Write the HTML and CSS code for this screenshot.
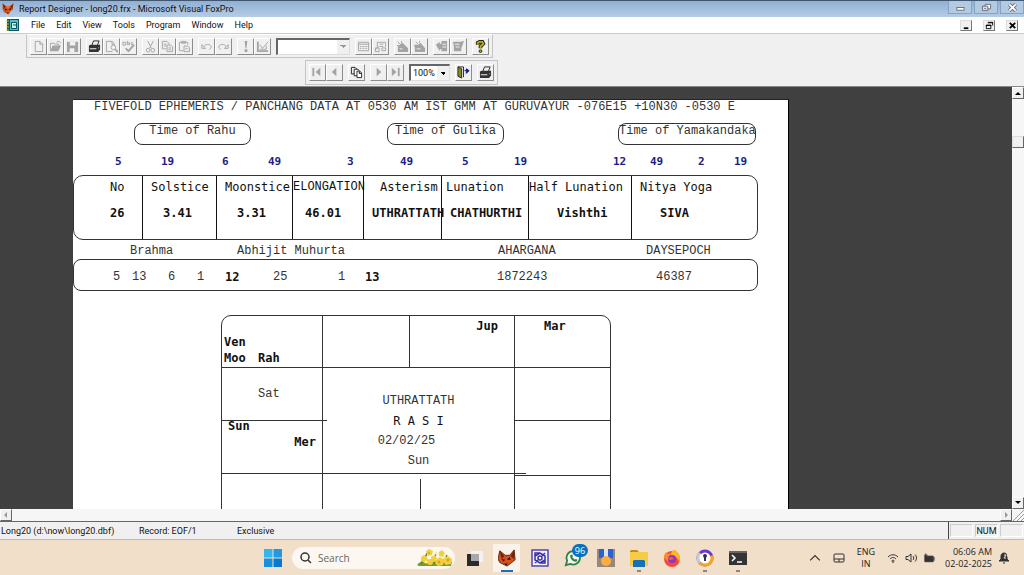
FILE: index.html
```html
<!DOCTYPE html>
<html lang="en">
<head>
    <meta charset="UTF-8">
    <meta name="viewport" content="width=device-width, initial-scale=1.0">
    <title>Report Designer - long20.frx</title>
    <link rel="stylesheet" href="styles.css">
</head>
<body>
    <header class="titlebar">
        <svg class="app-icon" viewBox="0 0 20 20"><path d="M1 1l6 4h6l6-4-1 10-4 3-3 5-7-3-3-5z" fill="#d2511f"/><path d="M1 1l5 5-3 5zM19 1l-5 5 3 5z" fill="#7a2a14"/><path d="M5 9l4 2-3 2zM15 8l-4 3 3 1zM8 16l3 0-1 2z" fill="#241008"/><path d="M7 6h6l-3 4z" fill="#f08a3a"/></svg>
        <span class="title">Report Designer - long20.frx - Microsoft Visual FoxPro</span>
        <div class="window-buttons">
            <button type="button" aria-label="Minimize"><svg viewBox="0 0 12 10"><rect x="2" y="5" width="8" height="3" fill="#fff" stroke="#667"/></svg></button>
            <button type="button" aria-label="Restore"><svg viewBox="0 0 12 10"><path d="M4.500 1.500h6v5h-6z" fill="#fff" stroke="#667"/><path d="M1.500 3.500h6v5h-6z" fill="#dde" stroke="#667"/><path d="M3.500 5.500h2v1h-2z" fill="#667"/></svg></button>
            <button type="button" aria-label="Close"><svg viewBox="0 0 12 10"><path d="M2.500 1.500l7 7M9.500 1.500l-7 7" stroke="#667" stroke-width="4"/><path d="M2.500 1.500l7 7M9.500 1.500l-7 7" stroke="#fff" stroke-width="2"/></svg></button>
        </div>
    </header>

    <nav class="menubar">
        <svg class="report-icon" viewBox="0 0 14 13"><path d="M1 0h12v12H1z" fill="#0b5560"/><path d="M4 1h8v10H4z" fill="#4fc3c3"/><path d="M5.500 3.500h5v6h-5z" fill="#c8f4f0" stroke="#0b5560"/><path d="M7 6h3" stroke="#0b5560"/><path d="M0 2h3M0 5h3M0 8h3M0 11h3" stroke="#d8c840"/></svg>
        <a href="#">File</a>
        <a href="#">Edit</a>
        <a href="#">View</a>
        <a href="#">Tools</a>
        <a href="#">Program</a>
        <a href="#">Window</a>
        <a href="#">Help</a>
        <div class="child-buttons">
            <button type="button" aria-label="Minimize report"><svg viewBox="0 0 10 10"><path d="M2 8h5" stroke="#000" stroke-width="2"/></svg></button>
            <button type="button" aria-label="Restore report"><svg viewBox="0 0 10 10"><path d="M3.500 1.500h5v3.500M1.500 4.500h5v4h-5zM3 2h6M1 5h6" fill="none" stroke="#000"/></svg></button>
            <button type="button" aria-label="Close report"><svg viewBox="0 0 10 10"><path d="M2 2l6 6M8 2l-6 6" stroke="#000" stroke-width="2"/></svg></button>
        </div>
    </nav>

    <div class="toolbars">
        <div class="toolbar standard">
            <div class="group">
                <button type="button" aria-label="New"><svg viewBox="0 0 14 14"><path d="M3.500 1.500h5l3 3v8h-8zM8.500 1.500v3h3"/></svg></button>
                <button type="button" aria-label="Open"><svg viewBox="0 0 14 14"><path d="M1.500 11.500v-8h4l1 1h4v2M8 2.500l3-1 2 2" /><path class="solid" d="M1 12l3-6h9l-3 6z"/></svg></button>
                <button type="button" aria-label="Save"><svg viewBox="0 0 14 14"><path class="solid" d="M1 2h12v11H1z"/><path class="hole" d="M4 2h6v4H4zM4 9h5v4H4z"/></svg></button>
            </div>
            <div class="group">
                <button type="button" aria-label="Print" class="on"><svg viewBox="0 0 14 14"><path d="M4 6l2-5h6l-2 5"/><path class="solid" d="M1 6l2-1h10v5l-2 3H1z"/><path class="hole" d="M2 9h7v1H2zM11 8h1v1h-1z"/></svg></button>
                <button type="button" aria-label="Print Preview"><svg viewBox="0 0 14 14"><path d="M8 12.500H1.500v-11h6l3 3M7.500 1.500v3h3"/><circle cx="9" cy="8" r="2.500"/><path d="M11 10l3 3" stroke-width="2"/></svg></button>
                <button type="button" aria-label="Spelling"><svg viewBox="0 0 14 14"><path d="M1 2.500h3v3H1zM6 1v4h2V3H6M12 3h-2v2h2"/><path d="M4 9l3 3 6-7" stroke-width="2"/></svg></button>
            </div>
            <div class="group">
                <button type="button" aria-label="Cut"><svg viewBox="0 0 14 14"><path d="M4 1l4 8M10 1L6 9"/><circle cx="4.500" cy="11" r="2"/><circle cx="9.500" cy="11" r="2"/></svg></button>
                <button type="button" aria-label="Copy"><svg viewBox="0 0 14 14"><path d="M6 9.500H1.500v-8h5l2 2V5M3 4.500h3M3 6.500h3"/><path d="M6.500 5.500h4l2 2v5h-6zM8 8.500h3M8 10.500h3"/></svg></button>
                <button type="button" aria-label="Paste"><svg viewBox="0 0 14 14"><path d="M6 11.500H1.500v-9h9V5M4 3.500V1.500h4v2z"/><path d="M6.500 6.500h4l2 2v4h-6zM8 9.500h3"/></svg></button>
            </div>
            <div class="group">
                <button type="button" aria-label="Undo"><svg viewBox="0 0 14 14"><path d="M4 7c2-3 7-3 8 0 0 2-1 3-2 3M2 5v4h4z"/></svg></button>
                <button type="button" aria-label="Redo"><svg viewBox="0 0 14 14"><path d="M10 7C8 4 3 4 2 7c0 2 1 3 2 3M12 5v4H8z"/></svg></button>
            </div>
            <div class="group">
                <button type="button" aria-label="Run"><svg viewBox="0 0 14 14"><path class="solid" d="M6 1h3l-1 8H7zM6 10h3v3H6z"/></svg></button>
                <button type="button" aria-label="Modify Form"><svg viewBox="0 0 14 14"><path d="M2 2v9M1 12h12" stroke-width="2"/><path d="M4 5l3 4 6-7M4 10h7V6"/></svg></button>
            </div>
            <select class="database" aria-label="Database" disabled><option></option></select>
            <div class="group">
                <button type="button" aria-label="Command Window"><svg viewBox="0 0 14 14"><path d="M1.500 2.500h11v9h-11zM1 4.500h12M3 7h2M6 7h2M9 7h2M3 9h2M6 9h2M9 9h2"/></svg></button>
                <button type="button" aria-label="View Window"><svg viewBox="0 0 14 14"><path d="M3.500 7.500v-5h9v5M1.500 8.500h4v4h-4zM6 7h4M6 4.500h4M8.500 8.500h4v3h-4zM1 11l4-4"/></svg></button>
            </div>
            <div class="group">
                <button type="button" aria-label="Form Wizard"><svg viewBox="0 0 14 14"><path d="M2 2l4 4M6 1v3M1 6h3"/><path class="solid" d="M2 7l5-4 6 6v4H2z"/><path class="hole" d="M4 9h3v1H4z"/></svg></button>
                <button type="button" aria-label="Report Wizard"><svg viewBox="0 0 14 14"><path d="M3 2l3 3M7 1v2"/><path class="solid" d="M1 5h5l2-2 5 6v4H2V8z"/><path class="hole" d="M4 9h4v1H4z"/></svg></button>
            </div>
            <div class="group">
                <button type="button" aria-label="AutoForm"><svg viewBox="0 0 14 14"><path class="solid" d="M1 5l4-3v2h2V1h6v11H7v-2H5v2z"/><path class="hole" d="M8 4h4v1H8zM8 7h4v1H8z"/></svg></button>
                <button type="button" aria-label="AutoReport"><svg viewBox="0 0 14 14"><path class="solid" d="M1 2h8l4-1-3 8v3H2V7z"/><path class="hole" d="M3 4h5v1H3zM4 7h4v1H4z"/></svg></button>
            </div>
            <button type="button" aria-label="Help" class="on"><svg viewBox="0 0 14 14"><path d="M4 5V3l2-1h3l1 2-3 3v2" stroke="#222" stroke-width="4"/><path d="M4 5V3l2-1h3l1 2-3 3v2" stroke="#b8aa10" stroke-width="2"/><circle cx="7" cy="12" r="1.500" fill="#b8aa10" stroke="#222"/></svg></button>
        </div>

        <div class="toolbar preview">
            <div class="group">
                <button type="button" aria-label="First Page"><svg viewBox="0 0 14 14"><path d="M2.500 2v9" stroke-width="2"/><path class="solid" d="M10 2v9L5 6.500z"/></svg></button>
                <button type="button" aria-label="Previous Page"><svg viewBox="0 0 14 14"><path class="solid" d="M9 2v9L4 6.500z"/></svg></button>
            </div>
            <button type="button" aria-label="Go to Page" class="on"><svg viewBox="0 0 14 14"><path d="M1.500 1.500h4l2 2v5h-6z" /><path d="M4.500 3.500h4l2 2v5h-6z" fill="#fff"/><path d="M7.500 5.500h3l2 2v5h-5zM10 6v2h2" fill="#fff"/></svg></button>
            <div class="group">
                <button type="button" aria-label="Next Page"><svg viewBox="0 0 14 14"><path class="solid" d="M5 2v9l5-4.500z"/></svg></button>
                <button type="button" aria-label="Last Page"><svg viewBox="0 0 14 14"><path class="solid" d="M3 2v9l5-4.500z"/><path d="M10.500 2v9" stroke-width="2"/></svg></button>
            </div>
            <select class="zoom" aria-label="Zoom"><option>100%</option></select>
            <button type="button" aria-label="Close Preview" class="on"><svg viewBox="0 0 14 14"><path d="M1 1h6v11" /><path d="M1 1l4 2v10l-4-2z" fill="#8a8a20"/><path d="M8 5h5M10 3l3 2-3 3z" stroke="#1a1a90" fill="#1a1a90"/></svg></button>
            <button type="button" aria-label="Print Report" class="on"><svg viewBox="0 0 14 14"><path d="M4 6l2-5h6l-2 5"/><path class="solid" d="M1 6l2-1h10v5l-2 3H1z"/><path class="hole" d="M2 9h7v1H2zM11 8h1v1h-1z"/></svg></button>
        </div>
    </div>

    <main class="workspace">
        <div class="canvas">
            <article class="sheet">
                <h1>FIVEFOLD EPHEMERIS / PANCHANG DATA AT 0530 AM IST GMM AT GURUVAYUR -076E15 +10N30 -0530 E</h1>

                <div class="periods">
                    <h2>Time of Rahu</h2>
                    <h2>Time of Gulika</h2>
                    <h2>Time of Yamakandaka</h2>
                </div>
                <div class="times">
                    <span>5</span><span>19</span><span>6</span><span>49</span>
                    <span>3</span><span>49</span><span>5</span><span>19</span>
                    <span>12</span><span>49</span><span>2</span><span>19</span>
                </div>

                <table class="fivefold">
                    <colgroup>
                        <col class="c-no"><col class="c-sol"><col class="c-moon"><col class="c-elong">
                        <col class="c-ast"><col class="c-lun"><col class="c-half"><col class="c-yoga">
                    </colgroup>
                    <thead>
                        <tr>
                            <th class="in-36">No</th>
                            <th class="in-8">Solstice</th>
                            <th class="in-8">Moonstice</th>
                            <th class="in-0 courier">ELONGATION</th>
                            <th class="in-16">Asterism</th>
                            <th class="in-4">Lunation</th>
                            <th class="in-0">Half Lunation</th>
                            <th class="in-8">Nitya Yoga</th>
                        </tr>
                    </thead>
                    <tbody>
                        <tr>
                            <td class="in-36">26</td>
                            <td class="in-20">3.41</td>
                            <td class="in-20">3.31</td>
                            <td class="in-12">46.01</td>
                            <td class="in-8">UTHRATTATH</td>
                            <td class="in-8">CHATHURTHI</td>
                            <td class="in-28">Vishthi</td>
                            <td class="in-28">SIVA</td>
                        </tr>
                    </tbody>
                </table>

                <div class="muhurta-names">
                    <span>Brahma</span><span>Abhijit Muhurta</span><span>AHARGANA</span><span>DAYSEPOCH</span>
                </div>
                <div class="muhurta">
                    <span>5</span><span>13</span><span>6</span><span>1</span><b>12</b><span>25</span><span>1</span><b>13</b><span>1872243</span><span>46387</span>
                </div>

                <section class="rasi">
                    <div class="house pisces"><b>Ven</b><b>Moo</b><b>Rah</b></div>
                    <div class="house aries"></div>
                    <div class="house taurus"><b>Jup</b></div>
                    <div class="house gemini last"><b>Mar</b></div>
                    <div class="house aquarius"><span>Sat</span></div>
                    <div class="center">
                        <span>UTHRATTATH</span>
                        <span class="name">R A S I</span>
                        <span class="date">02/02/25</span>
                        <span>Sun</span>
                    </div>
                    <div class="house cancer last"></div>
                    <div class="house capricorn"><b>Sun</b><b class="mercury">Mer</b></div>
                    <div class="house leo last"></div>
                    <div class="house sagittarius"></div>
                    <div class="house scorpio"></div>
                    <div class="house libra"></div>
                    <div class="house virgo last"></div>
                </section>
            </article>
        </div>
        <div class="scroll vertical">
            <button type="button" aria-label="Scroll up"><svg viewBox="0 0 8 8"><path d="M1 6l3-3 3 3z"/></svg></button>
            <div class="thumb"></div>
            <button type="button" aria-label="Scroll down"><svg viewBox="0 0 8 8"><path d="M1 2l3 3 3-3z"/></svg></button>
        </div>
    </main>
    <div class="scroll horizontal">
        <button type="button" aria-label="Scroll left"><svg viewBox="0 0 8 8"><path d="M5 1L2 4l3 3z"/></svg></button>
        <button type="button" aria-label="Scroll right"><svg viewBox="0 0 8 8"><path d="M3 1l3 3-3 3z"/></svg></button>
        <svg class="grip" viewBox="0 0 12 12"><path d="M1 12L12 1M5 12l7-7M9 12l3-3" stroke="#999"/></svg>
    </div>

    <div class="statusbar">
        <span class="table-name">Long20 (d:\now\long20.dbf)</span>
        <span class="record">Record: EOF/1</span>
        <span class="mode">Exclusive</span>
        <div class="keys"><span></span><span>NUM</span><span></span></div>
    </div>

    <footer class="taskbar">
        <div class="apps">
            <button type="button" class="app" aria-label="Start"><svg viewBox="0 0 18 18"><path d="M0 0h8.500v8.500H0z" fill="#35b5ee"/><path d="M9.500 0H18v8.500H9.500z" fill="#2199e2"/><path d="M0 9.500h8.500V18H0z" fill="#1690de"/><path d="M9.500 9.500H18V18H9.500z" fill="#0878d0"/></svg></button>
            <label class="search">
                <svg class="lens" viewBox="0 0 12 12"><circle cx="5" cy="5" r="4" fill="none" stroke="#333" stroke-width="1.500"/><path d="M8 8l3 3" stroke="#333" stroke-width="1.500"/></svg>
                <input type="search" placeholder="Search" aria-label="Search">
                <svg class="flowers" viewBox="0 0 36 20"><path d="M0 17c4-5 9-5 16-3 8-4 14-3 19 0l-1 4H2z" fill="#6f9e2e"/><path d="M4 16L11 4M17 16l2-12M25 17l5-10" stroke="#5a8c28" stroke-width="1.500"/><g fill="#f4cf3c"><path d="M4 9l3-2 3 2 1 3-3 3-4-2zM9 3l3-2 4 2-1 4-4 1zM14 9l4-2 2 3-2 4-4-1zM20 11l3-2 4 3-1 5-5 1-3-3zM22 4l3-2 3 3-2 4-4-1zM27 10l4-2 4 3-1 5-5 1-3-3z"/><circle cx="13" cy="14" r="3"/></g><g fill="#fff0a0"><circle cx="19" cy="5" r="1.500"/><circle cx="27" cy="9" r="1.500"/><circle cx="9" cy="14" r="1.500"/></g><g fill="#e89a20"><circle cx="22" cy="14" r="1.500"/><circle cx="31" cy="12" r="1.500"/><circle cx="12" cy="5" r="1"/></g></svg>
            </label>
            <button type="button" class="app" aria-label="Task View"><svg viewBox="0 0 18 18"><path d="M6 2h12v11H6z" fill="#f4f2f0"/><path d="M2 5h12v12H2z" fill="#2b2b2b"/><path d="M6 5h8v7H6z" fill="#a9a9ab"/></svg></button>
            <button type="button" class="app active" aria-label="Visual FoxPro"><svg viewBox="0 0 20 20"><path d="M2 2l6 5h5l5-6 1 11-5 4-4 3-8-4-2-4z" fill="#d2511f" stroke="#5a1e10"/><path d="M2 2l5 6-3 3zM18 1l-4 7 4 3z" fill="#6a2412"/><path d="M4 11l4 1-2 2zM13 9l-3 3 4 0zM7 16l4 0-2 2z" fill="#241008"/></svg></button>
            <button type="button" class="app" aria-label="Astrology"><svg viewBox="0 0 18 18"><path d="M1 1h16v16H1z" fill="#f2f0ff" stroke="#5145b4" stroke-width="1.500"/><path d="M4 4h5l5 3v7H9l-5-3zM4 7l5-3M9 14l5-3M4 14l3-3M14 4l-3 3" fill="none" stroke="#3c32a0" stroke-width="1.500"/><circle cx="9" cy="9" r="2" fill="none" stroke="#3c32a0" stroke-width="1.500"/></svg></button>
            <button type="button" class="app" aria-label="WhatsApp"><svg viewBox="0 0 20 20"><path d="M2 18l1.500-5a7.500 7.500 0 1 1 3.500 3.500z" fill="#f5f3ea" stroke="#2c8048" stroke-width="2"/><path d="M7 7l2-1 1 2-1 1 3 3 1-1 2 1-1 2c-4 1-8-4-7-7z" fill="#2c8048"/></svg><span class="badge">96</span></button>
            <button type="button" class="app" aria-label="Medal"><svg viewBox="0 0 18 18"><path d="M0 0h18v18H0z" fill="#96897c"/><path d="M2 0h5v9H2zM11 0h5v9h-5z" fill="#2c62cf"/><path d="M7 0h4v8H7z" fill="#d8e4f8"/><circle cx="9" cy="12" r="5" fill="#ffad42"/></svg></button>
            <button type="button" class="app running" aria-label="File Explorer"><svg viewBox="0 0 18 18"><path d="M0 2l1-1h6l2 2H0z" fill="#c88a16"/><path d="M0 3h17l1 1v13H0z" fill="#f6cb48"/><path d="M3 12l1-1h10l1 1v6H3z" fill="#1572b8"/></svg></button>
            <button type="button" class="app" aria-label="Firefox"><svg viewBox="0 0 18 18"><circle cx="9" cy="10" r="8" fill="#f4493c"/><path d="M9 2c2-2 3-1 3-1 5 3 6 8 4 12-1-5-5-7-9-6z" fill="#ffb52b"/><path d="M1 9c0-4 2-6 2-6l2 2c3-1 4 0 4 0l-2 3-1 5z" fill="#ff8a24"/><circle cx="9" cy="10" r="4" fill="#8a38c8"/><path d="M5 9l4-1 2 2-4 1z" fill="#f4603c"/></svg></button>
            <button type="button" class="app running" aria-label="Avast Secure Browser"><svg viewBox="0 0 18 18"><circle cx="9" cy="9" r="8.500" fill="#6a3bc8"/><path d="M9 9L3 3a8.500 8.500 0 0 0 0 12z" fill="#ccc"/><path d="M9 9l-6 6a8.500 8.500 0 0 0 14-9z" fill="#f4a51c"/><circle cx="9" cy="9" r="5.500" fill="#fff"/><path d="M7 7a2 2 0 1 1 4 0l-1 2v3H8V9z" fill="#352a55"/></svg></button>
            <button type="button" class="app running" aria-label="Terminal"><svg viewBox="0 0 18 18"><path d="M0 2h18v14H0z" fill="#343434"/><path d="M0 2h18v2H0z" fill="#666"/><path d="M3 6l3 3-3 3M8 13h5" fill="none" stroke="#fff" stroke-width="1.500"/></svg></button>
        </div>
        <div class="tray">
            <svg class="chevron" viewBox="0 0 10 10"><path d="M1 7l4-4 4 4"/></svg>
            <svg class="touchpad" viewBox="0 0 12 12"><rect x="1" y="2" width="10" height="8" rx="1"/><path d="M1 7h10M6 7v3"/></svg>
            <div class="language"><span>ENG</span><span>IN</span></div>
            <svg class="wifi" viewBox="0 0 12 12"><path d="M1 5c3-3 7-3 10 0M3 7c2-2 4-2 6 0M4.500 9c1-1 2-1 3 0"/><circle cx="6" cy="10" r=".5"/></svg>
            <svg class="sound" viewBox="0 0 12 12"><path d="M1 4.500h2L6 2v8L3 7.500H1zM8 4c1 1 1 3 0 4M10 2.500c2 2 2 5 0 7"/></svg>
            <svg class="battery" viewBox="0 0 13 12"><path d="M2 4h9v6H2z" fill="#333"/><path d="M12 5v4M3 1v3M1 3h4"/></svg>
            <div class="clock"><time>06:06 AM</time><time>02-02-2025</time></div>
            <svg class="bell" viewBox="0 0 12 12"><path d="M1 9l2-2V4c0-4 6-4 6 0v3l2 2zM5 11h2" fill="#333"/><path d="M6 3h2L6 6h2M9 1h2L9 4h2" stroke="#f1dfca"/></svg>
        </div>
    </footer>
</body>
</html>
```
FILE: styles.css
```css
* {
    box-sizing: border-box;
}
body {
    margin: 0;
    height: 100vh;
    display: flex;
    flex-direction: column;
    overflow: hidden;
    background-color: #f0f0f0;
    color: #111;
    font-family: "Open Sans", "Noto Sans", sans-serif;
    font-size: 9px;
}
button {
    display: flex;
    align-items: center;
    justify-content: center;
    padding: 0;
    border: none;
    background: none;
}
svg {
    display: block;
}

/* window chrome */
.titlebar, .menubar, .statusbar {
    flex: none;
    display: flex;
    align-items: center;
    font-family: Roboto, "Liberation Sans", sans-serif;
}
.titlebar {
    height: 17px;
    padding-left: 2px;
    border-top: 1px solid #41566f;
    background: linear-gradient(#92b0d3, #b4cce6);
}
.app-icon {
    width: 12px;
    height: 12px;
    margin-right: 5px;
}
.title {
    flex: 1;
}
.window-buttons {
    display: flex;
    align-self: flex-start;
    gap: 2px;
}
.window-buttons button {
    width: 24px;
    height: 13px;
    border: 1px solid #86a2c2;
    border-top: none;
    background-color: #b3cae3;
}
.window-buttons svg {
    width: 11px;
    height: 9px;
}
.menubar {
    gap: 11px;
    height: 16px;
    padding: 0 6px;
    background-color: #fff;
}
.menubar a {
    color: #111;
    text-decoration: none;
}
.report-icon {
    width: 14px;
    height: 13px;
}
.child-buttons {
    display: flex;
    gap: 11px;
    margin-left: auto;
}
.child-buttons button {
    width: 12px;
    height: 11px;
    background-color: #f0f0f0;
    border: 1px solid #ddd;
    border-right-color: #777;
    border-bottom-color: #777;
}
.child-buttons svg {
    width: 9px;
    height: 9px;
}

/* toolbars */
.toolbars {
    flex: none;
    height: 54px;
    border-top: 1px solid #ccc;
    border-bottom: 1px solid #888;
}
.toolbar {
    display: flex;
    align-items: center;
    gap: 5px;
    width: max-content;
    height: 25px;
    padding: 0 3px;
    border: 1px solid #c4c4c4;
}
.standard {
    height: 24px;
    margin-left: 26px;
    border-top-color: #fff;
}
.preview {
    margin: 2px 0 0 305px;
}
.group {
    display: flex;
}
.toolbar button {
    width: 17px;
    height: 17px;
    border: 1px solid #fff;
    border-right-color: #8c8c8c;
    border-bottom-color: #8c8c8c;
}
.toolbar svg {
    width: 13px;
    height: 13px;
    fill: none;
    stroke: #a4a4a4;
}
.toolbar .solid {
    fill: #a4a4a4;
    stroke: none;
}
.toolbar .hole {
    fill: #f0f0f0;
    stroke: none;
}
.toolbar .on svg {
    stroke: #222;
}
.toolbar .on .solid {
    fill: #333;
}
.toolbar select {
    appearance: none;
    height: 17px;
    margin: 0;
    padding: 0 2px;
    border: 1px solid #ddd;
    border-top: 2px solid #666;
    border-left: 2px solid #666;
    border-radius: 0;
    color: #111;
    font-family: Roboto, "Liberation Sans", sans-serif;
    font-size: 9px;
    background: conic-gradient(from 315deg at 50% 100%, #000 90deg, transparent 0) no-repeat right 3px center / 6px 3px,
        linear-gradient(#f0f0f0, #f0f0f0) no-repeat right / 12px 100%,
        #fff;
    background: linear-gradient(45deg, transparent 50%, #000 50%) no-repeat right 6px center / 3px 3px,
        linear-gradient(315deg, transparent 50%, #000 50%) no-repeat right 3px center / 3px 3px,
        linear-gradient(#f0f0f0, #f0f0f0) no-repeat right / 12px 100%,
        #fff;
}
.toolbar .database {
    width: 74px;
    opacity: 1;
    background: conic-gradient(from 315deg at 50% 100%, #999 90deg, transparent 0) no-repeat right 3px center / 6px 3px,
        linear-gradient(#f0f0f0, #f0f0f0) no-repeat right / 12px 100%,
        #fff;
}
.toolbar .zoom {
    width: 41px;
    background: conic-gradient(from 315deg at 50% 100%, #000 90deg, transparent 0) no-repeat right 3px center / 6px 3px,
        linear-gradient(#f0f0f0, #f0f0f0) no-repeat right / 12px 100%,
        #fff;
}

/* report preview */
.workspace {
    flex: 1;
    display: flex;
    min-height: 0;
}
.canvas {
    flex: 1;
    padding: 12px 0 0 73px;
    overflow: hidden;
    background: conic-gradient(#3e3e3e 25%, #434343 0 50%, #3e3e3e 0 75%, #434343 0) 0 0 / 2px 2px;
}
.sheet {
    width: 716px;
    min-height: 900px;
    background-color: #fff;
    border-right: 1px solid #000;
    border-top: 1px solid #222;
    color: #333;
    font-family: "Liberation Mono", "Courier New", monospace;
    font-size: 12px;
    line-height: 14px;
}
.sheet h1, .sheet h2 {
    margin: 0;
    font-size: 12px;
    font-weight: normal;
}
.sheet h1 {
    padding-right: 32px;
    text-align: center;
    white-space: nowrap;
}
.periods {
    display: grid;
    grid-template-columns: 253px 231px 138px;
    height: 32px;
    margin-top: 9px;
    padding-left: 61px;
}
.periods h2 {
    width: 117px;
    height: 22px;
    border: 1px solid #333;
    border-radius: 8px;
    text-align: center;
    white-space: nowrap;
}
.periods h2:last-child {
    width: auto;
}
.times {
    display: grid;
    grid-template-columns: 46px 61px 46px 79px 53px 62px 52px 99px 37px 48px 36px auto;
    height: 20px;
    padding-left: 42px;
    color: #1c1c8a;
    font-family: "DejaVu Sans Mono", monospace;
    font-weight: bold;
    font-size: 11px;
}
.fivefold {
    width: 685px;
    height: 65px;
    table-layout: fixed;
    border: 1px solid #333;
    border-radius: 10px;
    border-spacing: 0;
    color: #111;
    font-family: "DejaVu Sans Mono", monospace;
    font-size: 12px;
}
.fivefold th, .fivefold td {
    padding: 0;
    text-align: left;
    white-space: nowrap;
    vertical-align: top;
    border-left: 1px solid #111;
}
.fivefold th {
    height: 23px;
    padding-top: 4px;
    font-weight: normal;
}
.fivefold td {
    padding-top: 7px;
    font-weight: bold;
}
.fivefold th:first-child, .fivefold td:first-child {
    border-left: none;
}
.fivefold .courier {
    font-family: "Liberation Mono", "Courier New", monospace;
}
.c-no { width: 68px; }
.c-sol { width: 74px; }
.c-moon { width: 76px; }
.c-elong { width: 71px; }
.c-ast { width: 78px; }
.c-lun { width: 87px; }
.c-half { width: 103px; }
.in-0 { text-indent: 0; }
.in-4 { text-indent: 4px; }
.in-8 { text-indent: 8px; }
.in-12 { text-indent: 12px; }
.in-16 { text-indent: 16px; }
.in-20 { text-indent: 20px; }
.in-28 { text-indent: 28px; }
.in-36 { text-indent: 36px; }
.muhurta-names {
    display: grid;
    grid-template-columns: 107px 261px 148px auto;
    height: 19px;
    padding: 4px 0 0 57px;
}
.muhurta {
    display: grid;
    grid-template-columns: 19px 36px 29px 28px 48px 65px 27px 132px 159px auto;
    align-items: center;
    width: 685px;
    height: 32px;
    padding: 4px 0 0 39px;
    border: 1px solid #333;
    border-radius: 8px;
}
.muhurta b, .rasi b {
    color: #111;
    font-family: "DejaVu Sans Mono", monospace;
}

/* rasi chart */
.rasi {
    display: grid;
    grid-template-columns: 101px 87px 11px 94px 95px;
    grid-template-rows: 52px 53px 53px 53px;
    width: 390px;
    margin: 24px 0 0 148px;
    border: 1px solid #333;
    border-radius: 10px;
}
.house, .center {
    border-right: 1px solid #333;
    border-bottom: 1px solid #333;
}
.house.last {
    border-right: none;
}
.pisces {
    display: grid;
    grid-template-columns: 34px auto;
    grid-template-rows: 16px 16px;
    align-content: end;
    padding-left: 2px;
}
.pisces b:first-child {
    grid-column: 1 / 3;
}
.taurus {
    grid-column: 3 / 5;
    padding: 3px 16px 0 0;
    text-align: right;
}
.gemini {
    padding: 3px 0 0 29px;
}
.aquarius {
    padding: 19px 0 0 36px;
}
.center {
    grid-column: 2 / 5;
    grid-row: 2 / 4;
    display: flex;
    flex-direction: column;
    align-items: center;
    gap: 6px;
    padding-top: 26px;
}
.center .name {
    color: #111;
    font-family: "DejaVu Sans Mono", monospace;
}
.center .date {
    padding-right: 24px;
}
.capricorn {
    display: flex;
    flex-direction: column;
    gap: 6px;
    padding: 0 6px;
    line-height: 10px;
}
.capricorn .mercury {
    align-self: flex-end;
}
.leo {
    margin-bottom: -2px;
}
/* these two rules run on a little past the corner of the cell */
.aquarius, .center {
    position: relative;
}
.aquarius::after, .center::after {
    content: "";
    position: absolute;
    left: 100%;
    bottom: -1px;
    width: 5px;
    border-bottom: 1px solid #333;
}
.center::after {
    width: 12px;
}
.scorpio {
    grid-column: 2 / 4;
    margin-top: 5px;
}

/* scrollbars */
.scroll {
    flex: none;
    display: flex;
    background-color: #f6f6f6;
}
.scroll button {
    width: 12px;
    height: 12px;
    background-color: #f0f0f0;
    border: 1px solid #fff;
    border-right-color: #666;
    border-bottom-color: #666;
}
.scroll svg {
    width: 8px;
    height: 8px;
}
.vertical {
    flex-direction: column;
    width: 12px;
}
.vertical .thumb {
    height: 12px;
    margin: 37px 0 auto;
    background-color: #f0f0f0;
    border: 1px solid #ddd;
    border-right-color: #666;
    border-bottom-color: #666;
}
.horizontal {
    height: 12px;
}
.horizontal button:first-child {
    margin-right: auto;
}
.horizontal path {
    fill: #999;
}
.horizontal .grip {
    width: 12px;
    height: 12px;
}

.statusbar {
    height: 19px;
    padding-left: 1px;
    border-top: 1px solid #666;
    border-bottom: 1px solid #bbb;
}
.table-name {
    width: 138px;
}
.record {
    width: 98px;
}
.keys {
    display: flex;
    gap: 2px;
    height: 17px;
    margin-left: auto;
    padding: 2px 1px;
    border-left: 1px solid #444;
}
.keys span {
    width: 23px;
    border: 1px solid #ccc;
    border-right-color: #fff;
    border-bottom-color: #fff;
    line-height: 12px;
    text-align: center;
}

/* taskbar */
.taskbar {
    flex: none;
    display: grid;
    grid-template-columns: 1fr auto 1fr;
    align-items: center;
    height: 35px;
    padding-right: 14px;
    background-color: #f1dfca;
}
.apps {
    grid-column: 2;
    display: flex;
    align-items: center;
}
.app {
    position: relative;
    width: 33px;
    height: 28px;
}
.app svg {
    width: 18px;
    height: 18px;
}
.app.active {
    border-radius: 3px;
    background: linear-gradient(#1572c0, #1572c0) no-repeat center bottom / 12px 2px, #fbf3ea;
    background-clip: content-box;
    padding: 0 3px;
}
.app.running {
    background: linear-gradient(#8d857c, #8d857c) no-repeat center bottom / 4px 2px;
}
.badge {
    position: absolute;
    top: 0;
    right: 1px;
    width: 16px;
    height: 13px;
    border-radius: 7px;
    background-color: #0872bd;
    color: #fff;
    font-family: "Open Sans", sans-serif;
    font-size: 9px;
    line-height: 13px;
    text-align: center;
}
.search {
    display: flex;
    align-items: center;
    width: 163px;
    height: 22px;
    margin: 0 2px 0 3px;
    padding: 0 2px 0 8px;
    border-radius: 11px;
    background-color: #fcf7f0;
}
.lens {
    width: 12px;
    height: 12px;
}
.search input {
    flex: 1;
    min-width: 0;
    padding: 0 6px;
    border: none;
    background: none;
    font-family: "Open Sans", sans-serif;
    font-size: 10px;
}
.search input::placeholder {
    color: #666;
}
.flowers {
    width: 36px;
    height: 20px;
}
.tray {
    display: flex;
    align-items: center;
    justify-content: flex-end;
    gap: 6px;
    color: #222;
    line-height: 12px;
}
.tray svg {
    width: 12px;
    height: 12px;
    fill: none;
    stroke: #333;
}
.chevron, .touchpad {
    margin-right: 6px;
}
.language, .clock {
    display: flex;
    flex-direction: column;
    align-items: center;
}
.language {
    margin-right: 6px;
}
.clock {
    align-items: flex-end;
    margin-left: 4px;
}
```
